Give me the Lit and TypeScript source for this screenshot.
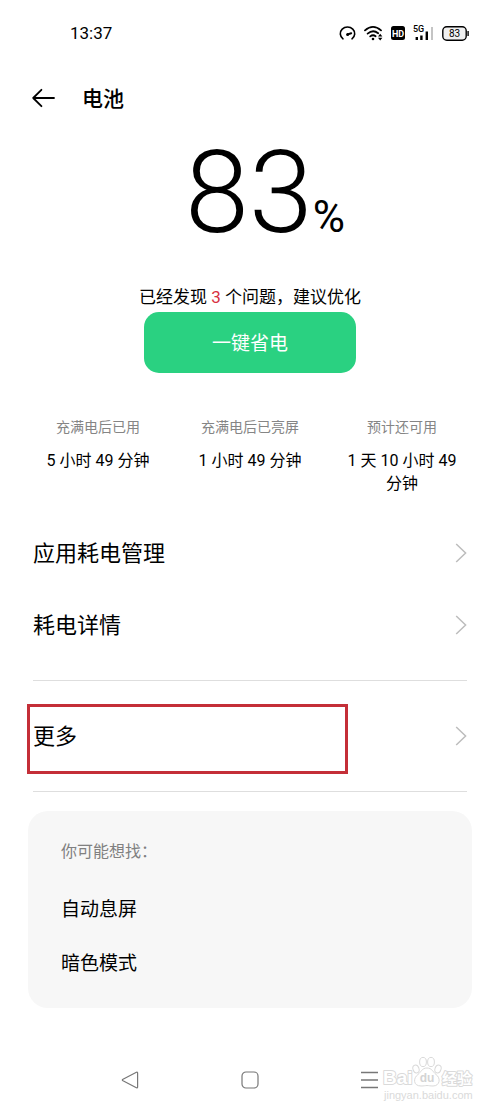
import { LitElement, html, css } from "lit";
import { customElement, property } from "lit/decorators.js";

interface Stat {
  label: string;
  value: string;
}

const STATS: Stat[] = [
  { label: "充满电后已用", value: "5 小时 49 分钟" },
  { label: "充满电后已亮屏", value: "1 小时 49 分钟" },
  { label: "预计还可用", value: "1 天 10 小时 49 分钟" },
];

const SUGGESTIONS = ["自动息屏", "暗色模式"];

@customElement("status-bar")
class StatusBar extends LitElement {
  static styles = css`
    :host {
      display: flex;
      align-items: center;
      justify-content: space-between;
      height: 66px;
      padding: 0 31px 0 70px;
    }
    .time {
      font-size: 17px;
      line-height: 24px;
    }
    .icons {
      display: flex;
      align-items: center;
      gap: 8px;
    }
    svg {
      display: block;
    }
    .glyph {
      font-family: Roboto, "Liberation Sans", sans-serif;
    }
  `;

  render() {
    return html`
      <span class="time">13:37</span>
      <div class="icons">
        <svg width="17" height="16" viewBox="0 0 17 16" fill="none" stroke="#000" stroke-width="1.6" stroke-linecap="round">
          <path d="M4 13.8A7.2 6.6 0 1 1 13 13.8" />
          <path d="M8.8 9.4L12.2 8.2" stroke-width="2" />
          <circle cx="8.6" cy="9.5" r="1.5" fill="#000" stroke="none" />
        </svg>
        <svg width="19" height="16" viewBox="0 0 19 16" fill="none" stroke="#000" stroke-width="1.8" stroke-linecap="round">
          <path d="M1 5.4Q9 -1.6 17 5.4" />
          <path d="M3.6 8.6Q9 4 14.2 8.2" />
          <path d="M6.2 11.4Q9 9.2 11.6 11.2" />
          <circle cx="9" cy="14" r="1.3" fill="#000" stroke="none" />
          <path d="M14 11.6L16.2 8.8L18.4 11.6ZM14 12.8L16.2 15.6L18.4 12.8Z" fill="#000" stroke="none" />
        </svg>
        <svg width="14" height="14" viewBox="0 0 14 14">
          <rect width="14" height="14" rx="2.5" fill="#000" />
          <text class="glyph" x="7" y="10.5" text-anchor="middle" font-size="9" font-weight="700" fill="#fff">HD</text>
        </svg>
        <svg width="21" height="16" viewBox="0 0 21 16">
          <text class="glyph" x="0" y="7" font-size="9" font-weight="500">5G</text>
          <path d="M2.6 12h2.4v3h-2.4zM7.2 10.5h2.4v4.5h-2.4zM12.6 6.6h2.4v8.4h-2.4z" />
          <path d="M18 2h2v13h-2z" fill="#c4c4c4" />
        </svg>
        <svg width="27" height="15" viewBox="0 0 27 15">
          <rect x="0.8" y="0.8" width="23.4" height="13.4" rx="4" fill="#f0f0f0" stroke="#000" stroke-width="1.4" />
          <path d="M25.4 5h1.4v5h-1.4z" />
          <text class="glyph" x="12.5" y="11" text-anchor="middle" font-size="10">83</text>
        </svg>
      </div>
    `;
  }
}

@customElement("settings-row")
class SettingsRow extends LitElement {
  @property() label = "";
  @property({ type: Boolean }) marked = false;

  static styles = css`
    :host {
      display: block;
    }
    .row {
      position: relative;
      display: flex;
      align-items: center;
      justify-content: space-between;
      height: 72px;
      font-size: 22px;
      line-height: 32px;
      color: #000;
      text-decoration: none;
    }
    .text {
      padding-top: 2px;
    }
    .frame {
      position: absolute;
      left: -6px;
      top: 4px;
      box-sizing: border-box;
      width: 74%;
      height: 70px;
      border: 3px solid #c42f38;
    }
    svg {
      display: block;
    }
  `;

  render() {
    return html`
      <a class="row" href="#">
        <span class="text">${this.label}</span>
        <svg width="12" height="20" viewBox="0 0 12 20" fill="none" stroke="#bdbdbd" stroke-width="1.5">
          <path d="M1.2 1L10.6 10L1.2 19" />
        </svg>
        ${this.marked ? html`<span class="frame"></span>` : ""}
      </a>
    `;
  }
}

@customElement("nav-bar")
class NavBar extends LitElement {
  static styles = css`
    :host {
      position: relative;
      display: flex;
      align-items: center;
      justify-content: center;
      gap: 100px;
      height: 60px;
    }
    .key {
      display: block;
      padding: 0;
      border: 0;
      background: none;
    }
    svg {
      display: block;
    }
    .watermark {
      position: absolute;
      right: 24px;
      top: 5px;
    }
    .brand {
      font-family: "Liberation Sans", "Noto Sans CJK SC", sans-serif;
      font-weight: 700;
      paint-order: stroke;
      stroke-width: 2px;
      stroke-linejoin: round;
    }
    .site {
      font-family: "Liberation Sans", sans-serif;
    }
  `;

  render() {
    return html`
      <button class="key" aria-label="返回">
        <svg width="20" height="20" viewBox="0 0 20 20" fill="none" stroke="#777" stroke-width="1.2" stroke-linejoin="round">
          <path d="M3 9.2L16.4 2.2Q17.6 1.8 17.6 3V17Q17.6 18.2 16.4 17.8L3 10.8Q1.6 10 3 9.2Z" />
        </svg>
      </button>
      <button class="key" aria-label="主屏幕">
        <svg width="20" height="20" viewBox="0 0 20 20" fill="none" stroke="#777" stroke-width="1.2">
          <rect x="2" y="2" width="16" height="16" rx="4" />
        </svg>
      </button>
      <button class="key" aria-label="最近任务">
        <svg width="20" height="20" viewBox="0 0 20 20" fill="none" stroke="#777" stroke-width="1.4">
          <path d="M1 2.5H18M1 10H18M1 17.5H18" />
        </svg>
      </button>
      <svg class="watermark" width="94" height="50" viewBox="0 0 94 50" fill="#fff" stroke="#dadada" stroke-width="1">
        <text class="brand" x="1" y="29" font-size="19">Bai</text>
        <ellipse cx="34" cy="14" rx="3" ry="4" transform="rotate(-20 34 14)" />
        <ellipse cx="41" cy="7" rx="3.4" ry="4.6" />
        <ellipse cx="49" cy="7" rx="3.4" ry="4.6" />
        <ellipse cx="56" cy="14" rx="3" ry="4" transform="rotate(20 56 14)" />
        <path d="M45 13C50 13 51 17 54 19.5C59 23 58 31 51 31C48 31 47 30.5 45 30.5C43 30.5 42 31 39 31C31 31 31 23 36 19.5C39 17 40 13 45 13Z" />
        <text class="site" x="45" y="27" text-anchor="middle" font-size="12" font-weight="700" fill="#d4d4d4" stroke="none">du</text>
        <text class="brand" x="60" y="29" font-size="15">经验</text>
        <text class="site" x="2" y="44" font-size="11" fill="#dadada" stroke="none">jingyan.baidu.com</text>
      </svg>
    `;
  }
}

@customElement("app-root")
class AppRoot extends LitElement {
  static styles = css`
    :host {
      display: block;
      min-height: 100vh;
      background: #fff;
      color: #000;
      font-family: Roboto, "Noto Sans CJK SC", sans-serif;
    }
    .header {
      display: flex;
      align-items: center;
      gap: 26px;
      height: 64px;
      padding: 0 32px;
    }
    .back {
      display: block;
      padding: 0;
      border: 0;
      background: none;
    }
    svg {
      display: block;
    }
    .title {
      margin: 0;
      padding-top: 2px;
      font-size: 21px;
      line-height: 32px;
      font-weight: 500;
    }
    .level {
      display: flex;
      justify-content: center;
      align-items: baseline;
      margin: 0 0 29px;
      padding-left: 30px;
      font-size: 115px;
      line-height: 126px;
      font-weight: 300;
    }
    .percent {
      font-size: 44px;
      line-height: 44px;
      font-weight: 400;
    }
    .notice {
      margin: 0;
      font-size: 17px;
      line-height: 24px;
      text-align: center;
    }
    .count {
      color: #d8303f;
    }
    .save {
      display: block;
      width: 212px;
      height: 61px;
      margin: 3px auto 0;
      padding: 2px 0 0;
      border: 0;
      border-radius: 15px;
      background: #2ad181;
      color: #fff;
      font-family: inherit;
      font-size: 19px;
      line-height: 28px;
    }
    .stats {
      display: grid;
      grid-template-columns: repeat(3, 1fr);
      margin: 43px 22px 0;
      text-align: center;
    }
    .stat {
      display: flex;
      flex-direction: column;
      gap: 11px;
      padding: 0 16px;
    }
    .label {
      color: #858585;
      font-size: 14px;
      line-height: 22px;
    }
    .value {
      font-size: 16px;
      line-height: 23px;
    }
    .list {
      margin: 22px 33px 0;
    }
    .divider {
      height: 1px;
      margin: 19px 0;
      border: 0;
      background: #dedede;
    }
    .card {
      margin: 0 28px;
      padding: 29px 33px 17px;
      border-radius: 20px;
      background: #f7f7f7;
    }
    .hint {
      margin: 0 0 19px;
      color: #808080;
      font-size: 16px;
      line-height: 24px;
    }
    .suggestion {
      display: block;
      padding: 13px 0;
      color: #000;
      font-size: 19px;
      line-height: 28px;
      text-decoration: none;
    }
    .nav {
      margin-top: 42px;
    }
  `;

  render() {
    return html`
      <status-bar></status-bar>
      <header class="header">
        <button class="back" aria-label="返回">
          <svg width="24" height="20" viewBox="0 0 24 20" fill="none" stroke="#000" stroke-width="1.8" stroke-linecap="round" stroke-linejoin="round">
            <path d="M22 10H1.2M9.4 1.8L1.2 10L9.4 18.2" />
          </svg>
        </button>
        <h1 class="title">电池</h1>
      </header>
      <main>
        <p class="level">83<span class="percent">%</span></p>
        <p class="notice">已经发现 <span class="count">3</span> 个问题，建议优化</p>
        <button class="save">一键省电</button>
        <section class="stats">
          ${STATS.map(
            (s) => html`<div class="stat">
              <span class="label">${s.label}</span>
              <span class="value">${s.value}</span>
            </div>`
          )}
        </section>
        <nav class="list">
          <settings-row label="应用耗电管理"></settings-row>
          <settings-row label="耗电详情"></settings-row>
          <hr class="divider" />
          <settings-row label="更多" marked></settings-row>
          <hr class="divider" />
        </nav>
        <section class="card">
          <p class="hint">你可能想找：</p>
          ${SUGGESTIONS.map((s) => html`<a class="suggestion" href="#">${s}</a>`)}
        </section>
      </main>
      <nav-bar class="nav"></nav-bar>
    `;
  }
}
